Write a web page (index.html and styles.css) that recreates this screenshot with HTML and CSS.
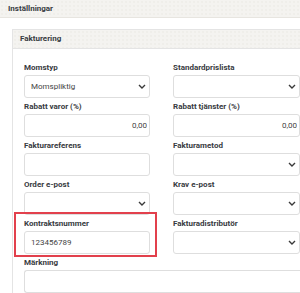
FILE: index.html
```html
<!DOCTYPE html>
<html lang="sv">
<head>
  <meta charset="UTF-8">
  <title>Inställningar</title>
  <link rel="stylesheet" href="styles.css">
</head>
<body>

  <div class="panel">
    <div class="panel-head">Inställningar</div>

    <div class="panel-body">
      <div class="card">
        <div class="card-head">Fakturering</div>

        <div class="card-body">
          <div class="form-grid">
            <div class="field">
              <label>Momstyp</label>
              <div class="select">
                <span>Momspliktig</span>
                <svg class="chevron" width="8" height="5" viewBox="0 0 8 5"><polyline points="1,1 4,4 7,1"/></svg>
              </div>
            </div>
            <div class="field">
              <label>Standardprislista</label>
              <div class="select">
                <span></span>
                <svg class="chevron" width="8" height="5" viewBox="0 0 8 5"><polyline points="1,1 4,4 7,1"/></svg>
              </div>
            </div>

            <div class="field">
              <label>Rabatt varor (%)</label>
              <input type="text" class="num" value="0,00">
            </div>
            <div class="field">
              <label>Rabatt tjänster (%)</label>
              <input type="text" class="num" value="0,00">
            </div>

            <div class="field">
              <label>Fakturareferens</label>
              <input type="text">
            </div>
            <div class="field">
              <label>Fakturametod</label>
              <div class="select">
                <span></span>
                <svg class="chevron" width="8" height="5" viewBox="0 0 8 5"><polyline points="1,1 4,4 7,1"/></svg>
              </div>
            </div>

            <div class="field">
              <label>Order e-post</label>
              <div class="select">
                <span></span>
                <svg class="chevron" width="8" height="5" viewBox="0 0 8 5"><polyline points="1,1 4,4 7,1"/></svg>
              </div>
            </div>
            <div class="field">
              <label>Krav e-post</label>
              <div class="select">
                <span></span>
                <svg class="chevron" width="8" height="5" viewBox="0 0 8 5"><polyline points="1,1 4,4 7,1"/></svg>
              </div>
            </div>

            <div class="field marked">
              <label>Kontraktsnummer</label>
              <input type="text" value="123456789">
            </div>
            <div class="field">
              <label>Fakturadistributör</label>
              <div class="select">
                <span></span>
                <svg class="chevron" width="8" height="5" viewBox="0 0 8 5"><polyline points="1,1 4,4 7,1"/></svg>
              </div>
            </div>

            <div class="field wide">
              <label>Märkning</label>
              <input type="text" class="open-end">
            </div>
          </div>
        </div>
      </div>
    </div>
  </div>

</body>
</html>
```

FILE: styles.css
```css
* {
  box-sizing: border-box;
}

body {
  margin: 0;
  width: 300px;
  height: 293px;
  overflow: hidden;
  background: #ffffff;
  font-family: Roboto, 'Liberation Sans', sans-serif;
  font-size: 8px;
  color: #383b41;
}

.panel-head,
.card-head {
  background-color: #f4f3f0;
  background-image: radial-gradient(#e9e7e2 0.6px, transparent 0.8px);
  background-size: 4px 4px;
  font-weight: 700;
  line-height: 17px;
}

.panel-head {
  height: 18px;
  padding-left: 8px;
  border-bottom: 1px solid #e7e5e0;
}

.panel-body {
  padding: 11px 0 0 12px;
}

.card {
  height: 264px;
  overflow: hidden;
  border-left: 1px solid #e4e4e4;
  border-top: 1px solid #e4e4e4;
}

.card-head {
  height: 19px;
  padding-left: 7px;
  border-bottom: 1px solid #e4e4e4;
}

.card-body {
  padding: 14px 0 0 11px;
}

.form-grid {
  display: grid;
  grid-template-columns: 126px 127px;
  column-gap: 23px;
  row-gap: 4px;
}

.field {
  display: flex;
  flex-direction: column;
}

.field label {
  font-weight: 700;
  line-height: 10px;
  margin-bottom: 2px;
}

.field.wide {
  grid-column: 1 / 3;
}

.field.marked {
  position: relative;
}

.field.marked::after {
  content: '';
  position: absolute;
  left: -10px;
  right: -7px;
  top: -7px;
  bottom: -3px;
  border: 2px solid #e2404c;
}

input,
.select {
  height: 23px;
  width: 100%;
  margin: 0;
  border: 1px solid #dedede;
  border-radius: 3px;
  background: #ffffff;
  font-family: Roboto, 'Liberation Sans', sans-serif;
  font-size: 8px;
  color: #444444;
  padding: 0 6px;
}

input.num {
  text-align: right;
  padding-right: 2px;
}

input.open-end {
  border-right: none;
  border-radius: 3px 0 0 3px;
}

.select {
  display: flex;
  align-items: center;
  justify-content: space-between;
  padding-right: 3px;
}

.chevron polyline {
  fill: none;
  stroke: #3a3a3a;
  stroke-width: 1.4;
}
```
